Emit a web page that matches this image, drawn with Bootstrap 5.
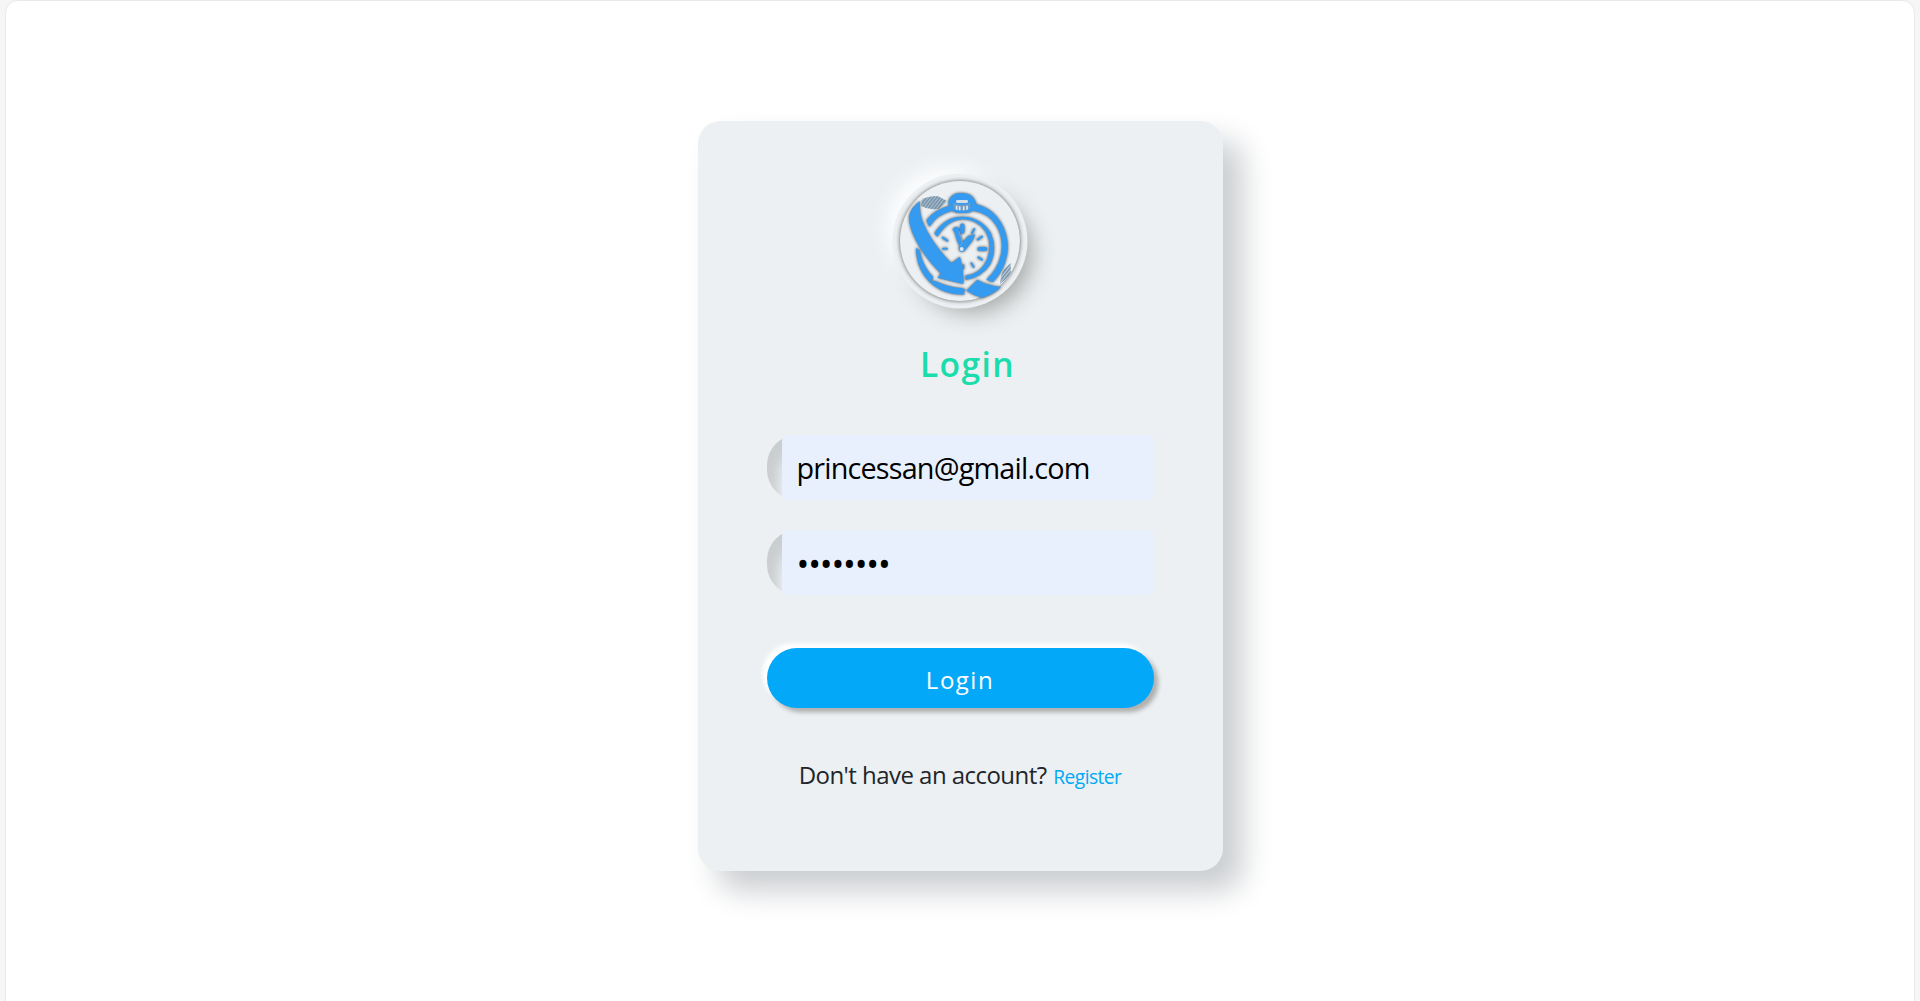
<!DOCTYPE html>
<html lang="en">
<head>
<meta charset="utf-8">
<meta name="viewport" content="width=device-width, initial-scale=1">
<title>Login</title>
<link href="https://cdn.jsdelivr.net/npm/bootstrap@5.3.0/dist/css/bootstrap.min.css" rel="stylesheet">
<style>
  body { background: #f6f6f6; font-family: "Open Sans", "Noto Sans", sans-serif; font-size: 24px; height: 100vh; overflow: hidden; }
  .page-panel { margin: 0 5px; height: 1030px; border: 1px solid #e9e9e9; border-radius: 13px; padding-top: 120px; }
  .login-box { width: 525px; height: 750px; padding: 60px 69px 45px; background: #ecf0f3; border-radius: 22.5px; box-shadow: 19.5px 19.5px 30px #cbced1, -19.5px -19.5px 30px #fff; }
  .logo { width: 120px; height: 120px; box-shadow: 0 0 4.5px #5f5f5f, 0 0 0 7.5px #ecf0f3, 12px 12px 22.5px #a7aaa7, -12px -12px 22.5px #fff; }
  .logo .raised { filter: drop-shadow(0 0 4px #444); }
  .title-text { margin-top: 36px; height: 54px; line-height: 54px; font-size: 33.6px; font-weight: 600; letter-spacing: 1.4px; padding-left: 15px; color: #1bdcab; }
  .login-form { margin-top: 44px; }
  .form-field { height: 65px; padding-left: 15px; margin-bottom: 30px; border-radius: 30px; box-shadow: inset 12px 12px 12px #cbced1, inset -12px -12px 12px #fff; }
  .form-field .form-control { height: 65px; border: 0; border-radius: 6px; background: #e8f0fe; color: #000; font-size: 28.8px; line-height: 40px; padding: 12px 15px; letter-spacing: -.82px; }
  .form-field .form-control[type=password] { font-size: 34px; letter-spacing: -1.15px; padding-top: 13px; padding-bottom: 11px; }
  .login-btn { height: 60px; margin-top: 23px; padding: 14px 18px 10px; border: 0; border-radius: 37.5px; background: #03a9f8; color: #fff; font-size: 24px; line-height: 36px; letter-spacing: 1.5px; box-shadow: 4.5px 4.5px 4.5px #b1b1b1, -4.5px -4.5px 4.5px #fff; }
  .login-btn:hover { background: #039be5; color: #fff; }
  .signup { margin-top: 49px; line-height: 36px; letter-spacing: -.54px; color: #212529; }
  .signup a { font-size: 19.2px; color: #03a9f4; letter-spacing: -.55px; margin-left: 1px; }
</style>
</head>
<body>
<main class="page-panel bg-white">
  <div class="login-box mx-auto">
    <div class="logo rounded-circle mx-auto">
      <svg class="d-block" width="120" height="120" viewBox="59 62 360 360" role="img" aria-label="Stopwatch">
        <defs>
          <pattern id="hatch" width="8" height="8" patternUnits="userSpaceOnUse" patternTransform="rotate(38)">
            <path d="M2 0V8" stroke="#66869f" stroke-width="3.5"/>
          </pattern>
        </defs>
        <path d="M124 119Q142 106 173 108L199 121Q193 133 175 145Q147 151 123 137Z" fill="#a9bccb"/>
        <path d="M124 119Q142 106 173 108L199 121Q193 133 175 145Q147 151 123 137Z" fill="url(#hatch)"/>
        <path d="M391 309V342Q378 356 359 372Q359 351 369 328Z" fill="#bccad5"/>
        <path d="M391 309V342Q378 356 359 372Q359 351 369 328Z" fill="url(#hatch)"/>
        <g class="raised">
        <g fill="#359bf0">
          <path d="M138 180Q162 147 206 137L204 126Q209 100 238 98Q281 96 288 132Q341 144 368 198Q394 253 373 311Q361 343 337 366L318 358Q352 328 362 282Q371 234 348 196Q325 158 277 151Q271 158 245 158Q221 158 216 151Q169 162 147 200Z"/>
          <path d="M107 262L118 270Q124 302 138 324Q148 342 159 350L154 362L166 363Q204 381 246 384L257 388L249 395L254 402Q202 406 163 378Q128 352 114 310Q107 286 107 262Z"/>
          <path d="M120 122Q115 151 126 182Q151 245 213 309L239 289Q251 331 249 371L171 352L182 340Q126 285 99 224Q84 187 87 166Q92 141 120 122Z"/>
          <path d="M258 391L291 358Q318 375 362 380Q335 405 304 412Q278 404 258 391Z"/>
          <path d="M162 219Q193 169 246 169Q301 170 331 217Q353 266 329 313Q305 350 256 359L255 346Q301 341 321 295Q337 249 314 212Q292 179 249 177Q201 179 171 230Z"/>
        </g>
        <g stroke="#359bf0" stroke-linecap="round" fill="none">
          <path d="M246 196V214" stroke-width="13"/>
          <path d="M282 206L275 218M305 229L292 238M305 298L294 291M280 320L273 309M249 324V315M187 232L201 241M188 265H200" stroke-width="6"/>
          <path d="M297 266H315" stroke-width="12"/>
        </g>
        <path d="M216 206L227 199L235 202L247 246L263 227L285 222L276 242L252 272Q239 279 235 265L237 257Q229 240 222 214Z" fill="#359bf0"/>
        </g>
        <rect x="227" y="119" width="36" height="9" rx="4" fill="#d4dfe8"/>
        <path d="M218 128Q243 138 270 128L269 145Q246 157 220 146Z" fill="#6f9cc4"/>
        <path d="M229 136V148M238 138V150M250 138V150M260 136V148" stroke="#e2ebf2" stroke-width="5"/>
        <circle cx="244" cy="266" r="6" fill="#dbe8f4"/>
        <path d="M236 212L246 248L238 258" stroke="#8eabc2" stroke-width="2" fill="none"/>
      </svg>
    </div>
    <div class="title-text text-center">Login</div>
    <form class="login-form">
      <div class="form-field d-flex align-items-center">
        <input class="form-control" type="text" name="email" aria-label="Email" value="princessan@gmail.com">
      </div>
      <div class="form-field d-flex align-items-center">
        <input class="form-control" type="password" name="password" aria-label="Password" value="abcdefgh">
      </div>
      <button class="btn login-btn w-100" type="button">Login</button>
    </form>
    <div class="signup text-center text-nowrap">Don't have an account? <a class="text-decoration-none" href="#">Register</a></div>
  </div>
</main>
<script src="https://cdn.jsdelivr.net/npm/bootstrap@5.3.0/dist/js/bootstrap.bundle.min.js"></script>
</body>
</html>
